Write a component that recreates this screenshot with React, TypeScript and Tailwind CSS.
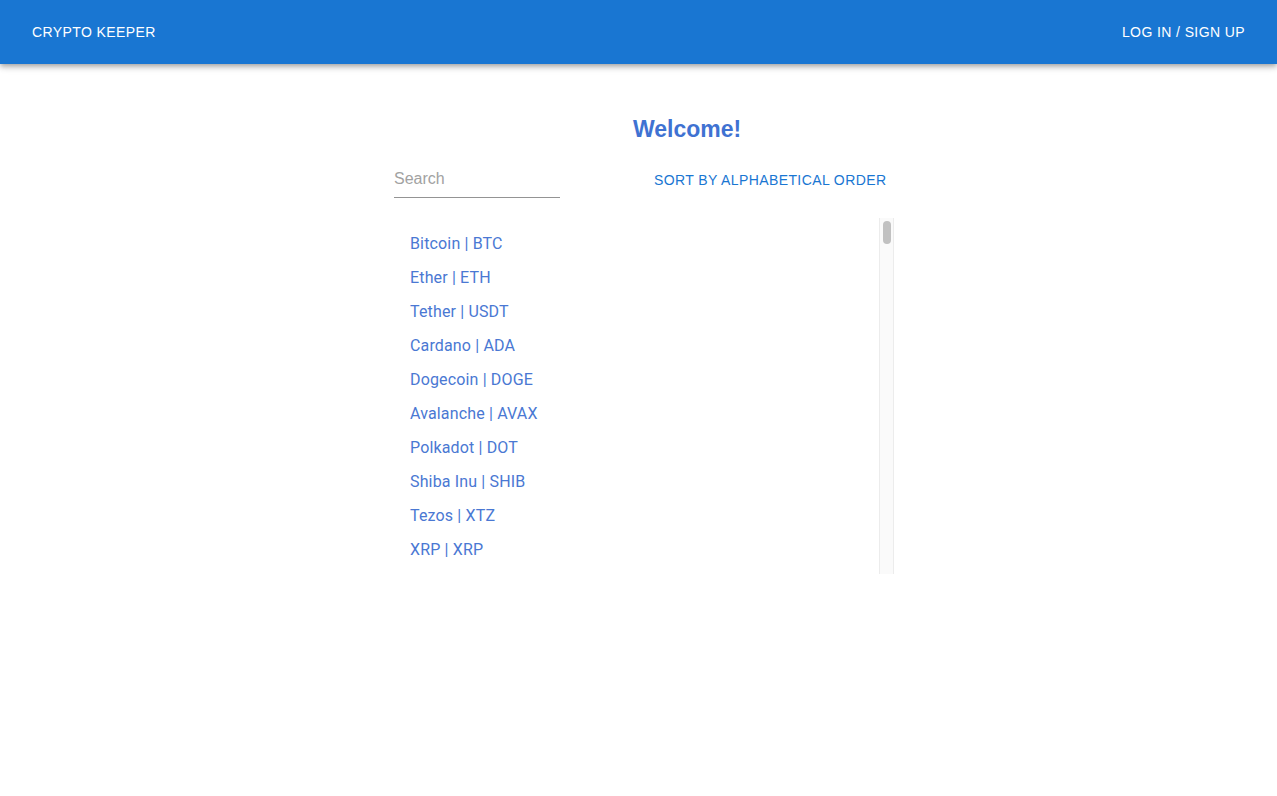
import React from "react";

const coins = [
  { name: "Bitcoin", symbol: "BTC" },
  { name: "Ether", symbol: "ETH" },
  { name: "Tether", symbol: "USDT" },
  { name: "Cardano", symbol: "ADA" },
  { name: "Dogecoin", symbol: "DOGE" },
  { name: "Avalanche", symbol: "AVAX" },
  { name: "Polkadot", symbol: "DOT" },
  { name: "Shiba Inu", symbol: "SHIB" },
  { name: "Tezos", symbol: "XTZ" },
  { name: "XRP", symbol: "XRP" },
];

export default function App() {
  return (
    <div className="min-h-[796px] bg-white font-['Liberation_Sans',Arial,sans-serif]">
      {/* App bar */}
      <header className="h-16 bg-[#1976d2] flex items-center justify-between px-8 text-white shadow-[0px_2px_4px_-1px_rgba(0,0,0,0.2),0px_4px_5px_0px_rgba(0,0,0,0.14),0px_1px_10px_0px_rgba(0,0,0,0.12)] relative z-10">
        <span className="text-[14px] tracking-[0.4px] uppercase">Crypto Keeper</span>
        <span className="text-[14px] tracking-[0.4px] uppercase">Log in / Sign up</span>
      </header>

      <main className="ml-[394px] w-[500px]">
        <h1 className="mt-[51px] ml-[239px] text-[23px] leading-[28px] font-bold text-[#3f72d2]">
          Welcome!
        </h1>

        <div className="mt-[19px] flex items-end">
          <div className="w-[166px] h-[36px] pb-[2px] border-b border-[#949494] flex items-center">
            <span className="text-[16px] text-[#a2a2a2]">Search</span>
          </div>
          <button className="ml-[94px] mb-[7px] text-[14px] tracking-[0.4px] uppercase text-[#1976d2]">
            Sort by alphabetical order
          </button>
        </div>

        <div className="mt-[20px] h-[356px] flex">
          <ul className="flex-1 py-2 overflow-hidden font-['Roboto',sans-serif]">
            {coins.map((c) => (
              <li key={c.symbol} className="h-[34px] px-4 pt-[2px] flex items-center text-[16px] tracking-[0.15px] text-[#4a78d3]">
                {c.name} | {c.symbol}
              </li>
            ))}
          </ul>
          <div className="w-[15px] h-full bg-[#fafafa] border-l border-r border-[#ececec] pt-[3px] flex justify-center">
            <div className="w-[8px] h-[23px] rounded-full bg-[#c1c1c1]" />
          </div>
        </div>
      </main>
    </div>
  );
}
